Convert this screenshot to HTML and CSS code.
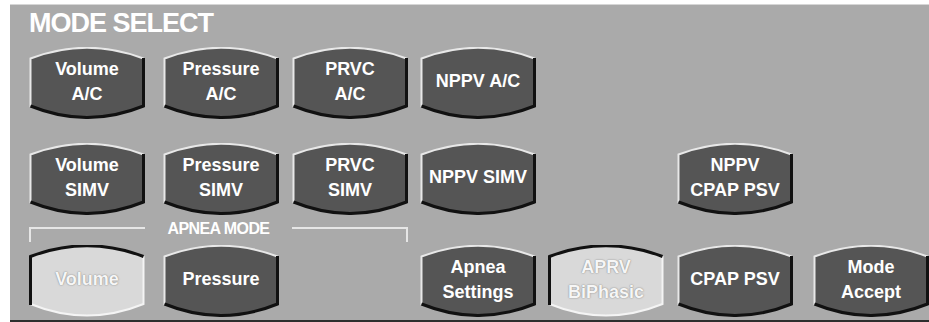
FILE: index.html
```html
<!DOCTYPE html>
<html lang="en">
<head>
    <meta charset="UTF-8">
    <title>Mode Select</title>
    <link rel="stylesheet" href="styles.css">
</head>
<body>
    <div class="panel">
        <h1 class="title">MODE SELECT</h1>

        <div class="row">
            <button class="mode">Volume<br>A/C</button>
            <button class="mode">Pressure<br>A/C</button>
            <button class="mode">PRVC<br>A/C</button>
            <button class="mode">NPPV A/C</button>
        </div>

        <div class="row second">
            <button class="mode">Volume<br>SIMV</button>
            <button class="mode">Pressure<br>SIMV</button>
            <button class="mode">PRVC<br>SIMV</button>
            <button class="mode">NPPV SIMV</button>
            <span></span>
            <button class="mode">NPPV<br>CPAP PSV</button>
        </div>

        <div class="row">
            <div class="apnea">
                <span class="bracket left"></span>
                <span class="apnea-label">APNEA MODE</span>
                <span class="bracket right"></span>
            </div>
        </div>

        <div class="row">
            <button class="mode off" disabled>Volume</button>
            <button class="mode">Pressure</button>
            <span></span>
            <button class="mode">Apnea<br>Settings</button>
            <button class="mode off" disabled>APRV<br>BiPhasic</button>
            <button class="mode">CPAP PSV</button>
            <button class="mode">Mode<br>Accept</button>
        </div>
    </div>
</body>
</html>
```

FILE: styles.css
```css
body {
    margin: 0;
    background: #ffffff;
    font-family: "Liberation Sans", Arial, sans-serif;
}
.panel {
    margin: 4px 0 0 10px;
    padding: 2px 0 3px 19px;
    background: #aaaaaa;
    border-top: 1px solid #d6d6d6;
    border-bottom: 2px solid #2e2e2e;
}
.title {
    margin: 0 0 8px 0;
    font-size: 27px;
    line-height: 32px;
    letter-spacing: -1px;
    font-weight: bold;
    color: #ffffff;
}
.row {
    display: grid;
    grid-template-columns: 134px 129px 128px 128px 129px 136px 116px;
}
.row.second {
    margin-top: 24px;
}
.mode {
    width: 116px;
    height: 72px;
    margin: 0;
    padding: 0 0 3px 0;
    border: none;
    font-family: "Liberation Sans", Arial, sans-serif;
    font-size: 18px;
    font-weight: bold;
    line-height: 25px;
    color: #ffffff;
    background: transparent url("data:image/svg+xml,%3Csvg xmlns='http://www.w3.org/2000/svg' viewBox='0 0 116 72' preserveAspectRatio='none'%3E%3Cpath d='M1.5 11.5 Q58 -10 114.5 11.5 V59 Q58 82 1.5 59 Z' fill='%23555555'/%3E%3Cpath d='M1.5 60 V11.5 Q58 -10 114.5 11.5' fill='none' stroke='%23e8e8e8' stroke-width='2'/%3E%3Cpath d='M114.5 11 V59 Q58 82 1.5 59' fill='none' stroke='%23111111' stroke-width='3'/%3E%3C/svg%3E") no-repeat;
    background-size: 100% 100%;
    cursor: pointer;
}
.mode.off {
    color: #f6f6f6;
    text-shadow: 0 0 1px #8a8a8a, 0 0 2px #a0a0a0;
    cursor: default;
    background-image: url("data:image/svg+xml,%3Csvg xmlns='http://www.w3.org/2000/svg' viewBox='0 0 116 72' preserveAspectRatio='none'%3E%3Cpath d='M1.5 11.5 Q58 -10 114.5 11.5 V59 Q58 82 1.5 59 Z' fill='%23d9d9d9'/%3E%3Cpath d='M114.5 11 V59 Q58 82 1.5 59' fill='none' stroke='%23f4f4f4' stroke-width='2'/%3E%3Cpath d='M1.5 60 V11.5 Q58 -10 114.5 11.5' fill='none' stroke='%23111111' stroke-width='3'/%3E%3C/svg%3E");
}
.apnea {
    grid-column: 1 / 4;
    display: flex;
    align-items: flex-start;
    width: 379px;
    height: 15px;
    margin: 12px 0 3px 0;
}
.bracket {
    width: 116px;
    height: 100%;
    box-sizing: border-box;
    border-top: 2px solid #e6e6e6;
}
.bracket.left {
    border-left: 2px solid #e6e6e6;
}
.bracket.right {
    border-right: 2px solid #e6e6e6;
}
.apnea-label {
    flex: 1;
    margin-top: -6px;
    text-align: center;
    font-size: 16px;
    line-height: 16px;
    font-weight: bold;
    letter-spacing: -0.6px;
    color: #ffffff;
}
```
